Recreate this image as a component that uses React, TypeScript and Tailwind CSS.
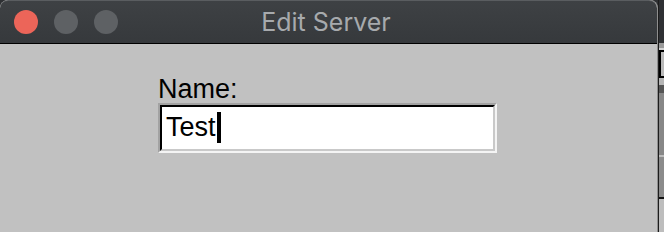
export default function App() {
  return (
    <div className="flex h-[232px] w-[664px] overflow-hidden bg-[#2e3033] font-['Liberation_Sans',Arial,sans-serif]">
      {/* dialog window */}
      <div className="flex w-[658px] flex-col overflow-hidden rounded-t-[8px] border-r border-[#8e8e8e] bg-[#c1c1c1]">
        <div className="grid h-[44px] shrink-0 grid-cols-[1fr_auto_1fr] items-center rounded-t-[8px] border-t border-b border-t-[#5a5d60] border-b-black bg-gradient-to-b from-[#3e4144] to-[#36393c]">
          <div className="flex items-center gap-[16px] pl-[14px]">
            <span className="h-[24px] w-[24px] rounded-full bg-[#ec6559]" />
            <span className="h-[24px] w-[24px] rounded-full bg-[#5e6164]" />
            <span className="h-[24px] w-[24px] rounded-full bg-[#5e6164]" />
          </div>
          <div className="pr-[5px] font-['Inter',sans-serif] text-[25px] leading-[30px] text-[#a7aaad]">
            Edit Server
          </div>
          <div />
        </div>

        <div className="flex flex-col pl-[158px] pt-[32px]">
          <label className="text-[27px] leading-[27px] text-black">Name:</label>
          <div className="w-[339px] border-2 border-t-[#a2a2a2] border-l-[#a2a2a2] border-r-[#f4f4f4] border-b-[#f4f4f4]">
            <div className="flex h-[46px] items-start border-2 border-t-black border-l-black border-r-[#c9c9c9] border-b-[#c9c9c9] bg-white pl-[4px] pt-[5px]">
              <span className="text-[27px] leading-[30px] text-black">Test</span>
              <span className="ml-[1px] h-[31px] w-[4px] bg-black" />
            </div>
          </div>
        </div>
      </div>

      {/* sliver of the window behind */}
      <div className="flex flex-1 flex-col border-l border-[#1c1c1c]">
        <div className="h-[43px] bg-[#2e3033]" />
        <div className="h-[5px] bg-[#9a9a9a]" />
        <div className="h-[2px] bg-[#d2d2d2]" />
        <div className="h-[28px] border-y-2 border-l-2 border-black bg-[#b9b9b9]" />
        <div className="h-[7px] bg-[#b5b5b5]" />
        <div className="h-[8px] bg-[#555555]" />
        <div className="h-[62px] bg-[#878787]" />
        <div className="h-[2px] bg-[#bcbcbc]" />
        <div className="h-[40px] bg-[#8b8b8b]" />
        <div className="h-[2px] bg-[#111111]" />
        <div className="flex-1 bg-[#bdbdbd]" />
      </div>
    </div>
  );
}
